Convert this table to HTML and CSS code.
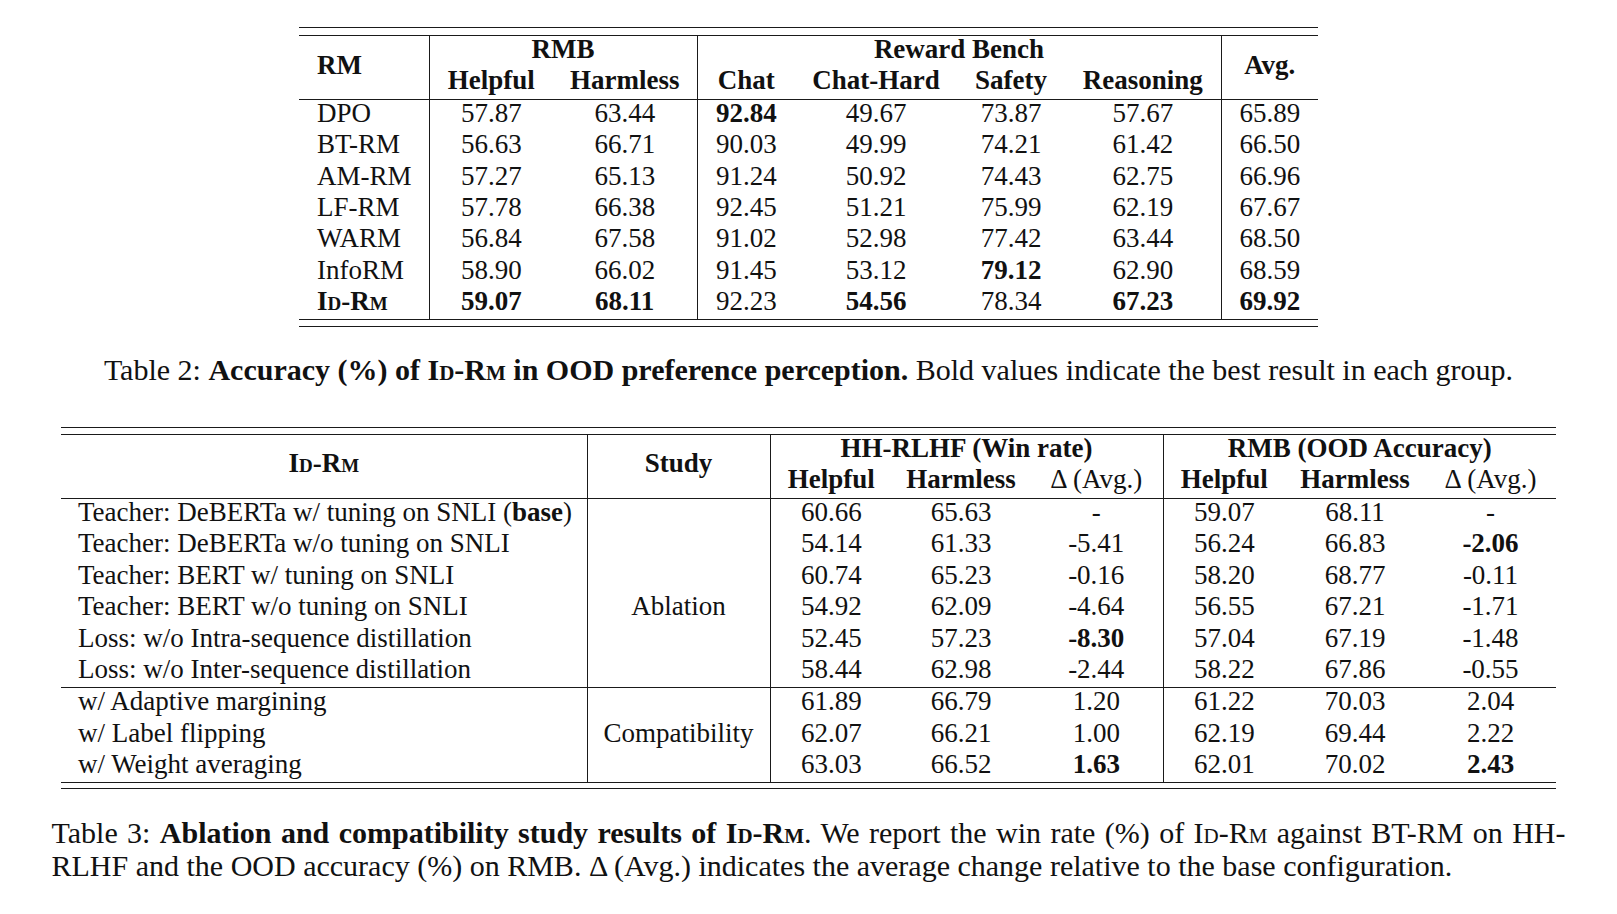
FILE: index.html
```html
<!DOCTYPE html>
<html>
<head>
<meta charset="utf-8">
<link rel="stylesheet" href="styles.css">
</head>
<body>
<div class="page">
  <div class="rules t1">
    <table class="tab">
      <colgroup>
        <col style="width:130px"><col style="width:124px"><col style="width:144px"><col style="width:98px"><col style="width:162px"><col style="width:108px"><col style="width:156px"><col style="width:97px">
      </colgroup>
      <thead>
        <tr>
          <th rowspan="2" class="left rm">RM</th>
          <th colspan="2" class="vl">RMB</th>
          <th colspan="4" class="vl">Reward Bench</th>
          <th rowspan="2" class="vl">Avg.</th>
        </tr>
        <tr>
          <th class="vl">Helpful</th><th>Harmless</th>
          <th class="vl">Chat</th><th>Chat-Hard</th><th>Safety</th><th>Reasoning</th>
        </tr>
      </thead>
      <tbody>
        <tr><td class="left rm">DPO</td><td class="vl">57.87</td><td>63.44</td><td class="vl"><b>92.84</b></td><td>49.67</td><td>73.87</td><td>57.67</td><td class="vl">65.89</td></tr>
        <tr><td class="left rm">BT-RM</td><td class="vl">56.63</td><td>66.71</td><td class="vl">90.03</td><td>49.99</td><td>74.21</td><td>61.42</td><td class="vl">66.50</td></tr>
        <tr><td class="left rm">AM-RM</td><td class="vl">57.27</td><td>65.13</td><td class="vl">91.24</td><td>50.92</td><td>74.43</td><td>62.75</td><td class="vl">66.96</td></tr>
        <tr><td class="left rm">LF-RM</td><td class="vl">57.78</td><td>66.38</td><td class="vl">92.45</td><td>51.21</td><td>75.99</td><td>62.19</td><td class="vl">67.67</td></tr>
        <tr><td class="left rm">WARM</td><td class="vl">56.84</td><td>67.58</td><td class="vl">91.02</td><td>52.98</td><td>77.42</td><td>63.44</td><td class="vl">68.50</td></tr>
        <tr><td class="left rm">InfoRM</td><td class="vl">58.90</td><td>66.02</td><td class="vl">91.45</td><td>53.12</td><td><b>79.12</b></td><td>62.90</td><td class="vl">68.59</td></tr>
        <tr><td class="left rm"><b class="sc">Id-Rm</b></td><td class="vl"><b>59.07</b></td><td><b>68.11</b></td><td class="vl">92.23</td><td><b>54.56</b></td><td>78.34</td><td><b>67.23</b></td><td class="vl"><b>69.92</b></td></tr>
      </tbody>
    </table>
  </div>

  <p class="cap cap1">Table 2: <b>Accuracy (%) of <span class="sc">Id-Rm</span> in OOD preference perception.</b> Bold values indicate the best result in each group.</p>

  <div class="rules t2">
    <table class="tab">
      <colgroup>
        <col style="width:526px"><col style="width:183px"><col style="width:122px"><col style="width:138px"><col style="width:133px"><col style="width:122px"><col style="width:140px"><col style="width:131px">
      </colgroup>
      <thead>
        <tr>
          <th rowspan="2"><span class="sc">Id-Rm</span></th>
          <th rowspan="2" class="vl">Study</th>
          <th colspan="3" class="vl">HH-RLHF (Win rate)</th>
          <th colspan="3" class="vl">RMB (OOD Accuracy)</th>
        </tr>
        <tr>
          <th class="vl">Helpful</th><th>Harmless</th><th><span class="nb">Δ (Avg.)</span></th>
          <th class="vl">Helpful</th><th>Harmless</th><th><span class="nb">Δ (Avg.)</span></th>
        </tr>
      </thead>
      <tbody>
        <tr><td class="left name">Teacher: DeBERTa w/ tuning on SNLI (<b>base</b>)</td><td rowspan="6" class="vl ablation">Ablation</td><td class="vl">60.66</td><td>65.63</td><td>-</td><td class="vl">59.07</td><td>68.11</td><td>-</td></tr>
        <tr><td class="left name">Teacher: DeBERTa w/o tuning on SNLI</td><td class="vl">54.14</td><td>61.33</td><td>-5.41</td><td class="vl">56.24</td><td>66.83</td><td><b>-2.06</b></td></tr>
        <tr><td class="left name">Teacher: BERT w/ tuning on SNLI</td><td class="vl">60.74</td><td>65.23</td><td>-0.16</td><td class="vl">58.20</td><td>68.77</td><td>-0.11</td></tr>
        <tr><td class="left name">Teacher: BERT w/o tuning on SNLI</td><td class="vl">54.92</td><td>62.09</td><td>-4.64</td><td class="vl">56.55</td><td>67.21</td><td>-1.71</td></tr>
        <tr><td class="left name">Loss: w/o Intra-sequence distillation</td><td class="vl">52.45</td><td>57.23</td><td><b>-8.30</b></td><td class="vl">57.04</td><td>67.19</td><td>-1.48</td></tr>
        <tr><td class="left name">Loss: w/o Inter-sequence distillation</td><td class="vl">58.44</td><td>62.98</td><td>-2.44</td><td class="vl">58.22</td><td>67.86</td><td>-0.55</td></tr>
        <tr class="mid"><td class="left name">w/ Adaptive margining</td><td rowspan="3" class="vl">Compatibility</td><td class="vl">61.89</td><td>66.79</td><td>1.20</td><td class="vl">61.22</td><td>70.03</td><td>2.04</td></tr>
        <tr><td class="left name">w/ Label flipping</td><td class="vl">62.07</td><td>66.21</td><td>1.00</td><td class="vl">62.19</td><td>69.44</td><td>2.22</td></tr>
        <tr><td class="left name">w/ Weight averaging</td><td class="vl">63.03</td><td>66.52</td><td><b>1.63</b></td><td class="vl">62.01</td><td>70.02</td><td><b>2.43</b></td></tr>
      </tbody>
    </table>
  </div>

  <p class="cap cap2"><span class="line first">Table 3: <b>Ablation and compatibility study results of <span class="sc">Id-Rm</span></b>. We report the win rate (%) of <span class="sc">Id-Rm</span> against BT-RM on HH-</span><span class="line">RLHF and the OOD accuracy (%) on RMB. Δ (Avg.) indicates the average change relative to the base configuration.</span></p>
</div>
</body>
</html>
```

FILE: styles.css
```css
html, body {
  margin: 0;
  padding: 0;
  background: #ffffff;
}

body {
  font-family: "Liberation Serif", "Times New Roman", serif;
  font-size: 27px;
  color: #111111;
}

.page {
  display: flex;
  flex-direction: column;
  align-items: center;
  padding-top: 27px;
}

.rules {
  border-top: 1.5px solid #1a1a1a;
  border-bottom: 1.5px solid #1a1a1a;
}

.t1 {
  padding: 7px 0 6px;
}

.t2 {
  padding: 6px 0 5px;
}

.tab {
  border-collapse: collapse;
  table-layout: fixed;
  border-top: 1.5px solid #1a1a1a;
  border-bottom: 1.5px solid #1a1a1a;
}

.tab thead {
  border-bottom: 1.5px solid #1a1a1a;
}

.t1 tbody tr {
  height: 31.43px;
}

.t2 tbody tr {
  height: 31.55px;
}

.tab thead tr {
  height: 32px;
}

.tab th,
.tab td {
  padding: 0 0 5px 0;
  line-height: 20px;
  text-align: center;
  vertical-align: middle;
  white-space: nowrap;
}

.tab th {
  font-weight: bold;
  padding-bottom: 6px;
}

.tab .vl {
  border-left: 1.5px solid #1a1a1a;
}

.tab .left {
  text-align: left;
}

.tab .rm {
  padding-left: 18px;
}

.tab .name {
  padding-left: 17px;
}

.tab .ablation {
  padding-top: 26px;
  padding-bottom: 0;
}

.tab tr.mid td {
  border-top: 1.5px solid #1a1a1a;
}

.sc {
  font-variant: small-caps;
}

.nb {
  font-weight: normal;
}

.cap {
  margin: 0;
  font-size: 30px;
  line-height: 33px;
}

.cap1 {
  margin-top: 26px;
  margin-bottom: 41px;
}

.cap2 {
  margin-top: 27px;
  width: 1514px;
}

.cap2 .line {
  display: block;
}

.cap2 .first {
  text-align: justify;
  text-align-last: justify;
}
```
